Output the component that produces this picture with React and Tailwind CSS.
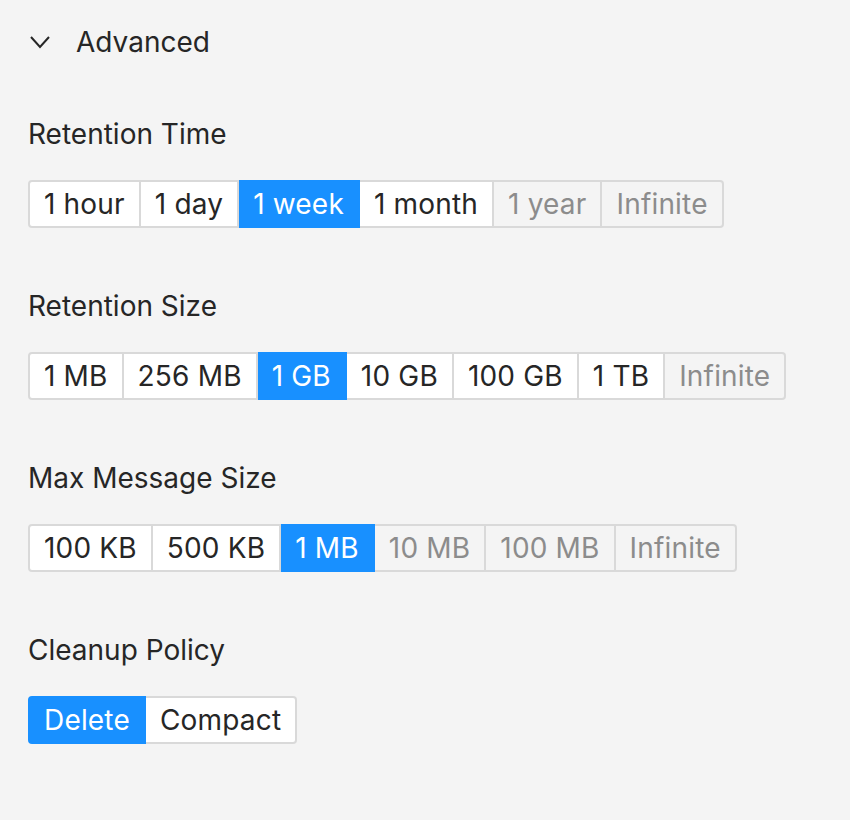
import React from 'react';

const sections = [
  {
    label: 'Retention Time',
    options: ['1 hour', '1 day', '1 week', '1 month', '1 year', 'Infinite'],
    selected: '1 week',
    disabled: ['1 year', 'Infinite'],
  },
  {
    label: 'Retention Size',
    options: ['1 MB', '256 MB', '1 GB', '10 GB', '100 GB', '1 TB', 'Infinite'],
    selected: '1 GB',
    disabled: ['Infinite'],
  },
  {
    label: 'Max Message Size',
    options: ['100 KB', '500 KB', '1 MB', '10 MB', '100 MB', 'Infinite'],
    selected: '1 MB',
    disabled: ['10 MB', '100 MB', 'Infinite'],
  },
  {
    label: 'Cleanup Policy',
    options: ['Delete', 'Compact'],
    selected: 'Delete',
    disabled: [],
  },
];

function RadioGroup({ options, selected, disabled }) {
  return (
    <div className="flex tracking-[0.18px]">
      {options.map((opt, i) => {
        const isSel = opt === selected;
        const isDis = disabled.includes(opt);
        const first = i === 0;
        const last = i === options.length - 1;
        return (
          <div
            key={opt}
            className={
              'h-[48px] px-[14px] flex items-center border-y-2 border-r-2 leading-none ' +
              (first ? 'border-l-2 rounded-l-[4px] ' : '') +
              (last ? 'rounded-r-[4px] ' : '') +
              (isSel
                ? 'bg-[#1890ff] border-[#1890ff] text-white'
                : isDis
                ? 'bg-[#f4f4f4] border-[#d9d9d9] text-[#8c8c8c]'
                : 'bg-white border-[#d9d9d9] text-[#262626]')
            }
          >
            {opt}
          </div>
        );
      })}
    </div>
  );
}

export default function App() {
  return (
    <div
      className="min-h-[820px] w-[850px] bg-[#f4f4f4] px-[28px] pt-[20px] text-[28px] text-[#262626]"
      style={{ fontFamily: 'Inter, "Noto Sans", sans-serif' }}
    >
      <div className="flex items-center h-[44px]">
        <svg width="24" height="24" viewBox="0 0 24 24">
          <polyline points="3,7 12,17 21,7" fill="none" stroke="#262626" strokeWidth="2" />
        </svg>
        <span className="ml-[24px]">Advanced</span>
      </div>
      <div className="mt-[48px] flex flex-col gap-[56px]">
        {sections.map((s) => (
          <div key={s.label}>
            <div className="h-[44px] leading-[44px]">{s.label}</div>
            <div className="mt-[24px]">
              <RadioGroup options={s.options} selected={s.selected} disabled={s.disabled} />
            </div>
          </div>
        ))}
      </div>
    </div>
  );
}
